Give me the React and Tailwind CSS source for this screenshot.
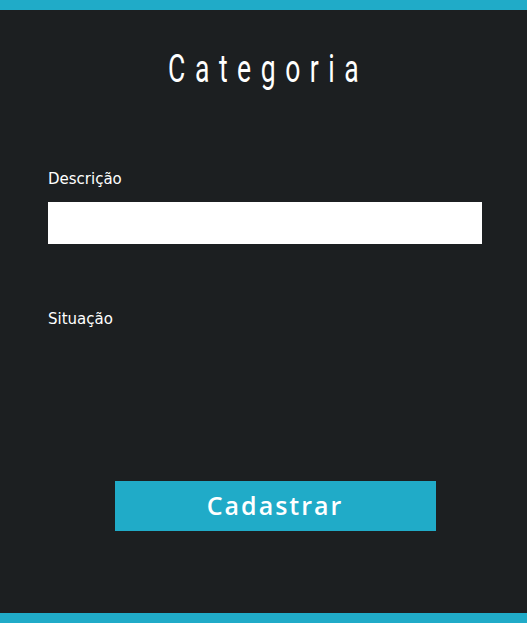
export default function App() {
  return (
    <div className="flex min-h-[623px] w-full flex-col bg-[#1c1f21] font-['DejaVu_Sans',sans-serif] text-white">
      <div className="h-[10px] bg-[#20abc8]" />
      <div className="flex flex-1 flex-col px-[48px] pr-[45px]">
        <h1 className="mt-[34px] flex h-[50px] items-center justify-center">
          <span className="ml-[6px] inline-block origin-center scale-x-[0.68] font-['Roboto',sans-serif] text-[39px] font-normal leading-none tracking-[0.36em]">
            Categoria
          </span>
        </h1>
        <label className="mt-[76px] block text-[15px] leading-[18px]">Descrição</label>
        <input className="mt-[14px] h-[42px] w-full bg-white px-2 text-black outline-none" />
        <label className="mt-[66px] block text-[15px] leading-[18px]">Situação</label>
        <div className="mt-[153px] flex justify-center">
          <button className="ml-[20px] h-[50px] w-[321px] bg-[#20abc8] font-['Open_Sans',sans-serif] text-[25px] font-semibold tracking-[0.08em] text-white">
            Cadastrar
          </button>
        </div>
      </div>
      <div className="mt-auto h-[10px] bg-[#20abc8]" />
    </div>
  );
}
